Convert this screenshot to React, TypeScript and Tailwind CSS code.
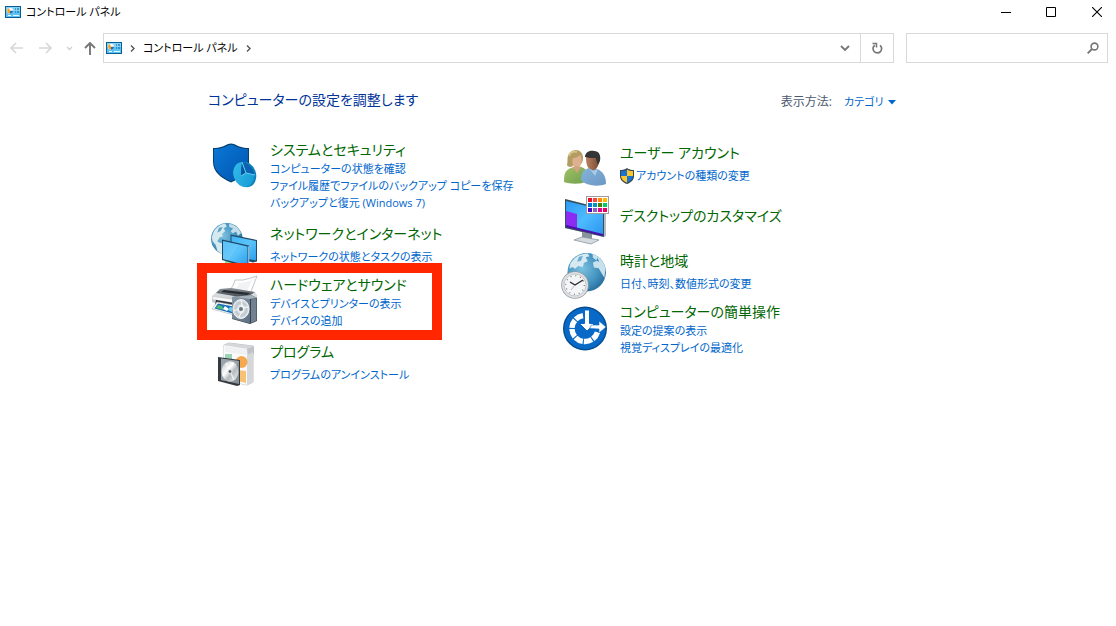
import type { ReactNode } from "react";

type Category = {
  title: string;
  icon: ReactNode;
  links: { label: string; shield?: boolean }[];
  highlighted?: boolean;
};

function ControlPanelIcon() {
  return (
    <svg width="16" height="12" viewBox="0 0 16 12" className="shrink-0">
      <rect width="16" height="12" fill="#0b5c94" />
      <rect x="1" y="1" width="14" height="10" fill="#5cc3f5" />
      <rect x="1" y="1" width="14" height="4" fill="#83d3f9" />
      <circle cx="5" cy="4.800" r="3" fill="#fff" />
      <path d="M5 4.800V7.800a3 3 0 0 1 -1-5.800z" fill="#f7a022" />
      <path d="M5 4.800h3a3 3 0 0 1-3 3z" fill="#1d6fb5" />
      <path d="M10 3h1M12 3h2M10 6h1M12 6h2" stroke="#0b5c94" strokeWidth="1.200" />
      <path d="M3 9.500h3M8 9.500h6" stroke="#e6f7ff" strokeWidth="1" />
    </svg>
  );
}

function SecurityIcon() {
  return (
    <svg width="50" height="50" viewBox="0 0 50 50" className="shrink-0">
      <defs>
        <linearGradient id="sec-a" x1="0" y1="0" x2="1" y2="1">
          <stop offset="0" stopColor="#0a78d6" />
          <stop offset="1" stopColor="#0054ae" />
        </linearGradient>
        <linearGradient id="sec-b" x1="0" y1="0" x2="1" y2="1">
          <stop offset="0" stopColor="#35bdec" />
          <stop offset="1" stopColor="#1398d2" />
        </linearGradient>
      </defs>
      <path d="M5 8C12 8 16 6 20 4q3-1 6 0c4 2 8 4 15 4v14c0 10-8 16-18 20.500C13 38 5 32 5 22z" fill="#07406f" />
      <path d="M6 9c7 0 11-2 15-4q2-.7 4 0c4 2 8 4 15 4v13c0 9-8 15-17 19.300C14 37 6 31 6 22z" fill="url(#sec-a)" />
      <ellipse cx="37.500" cy="34.500" rx="10.500" ry="13" fill="#0f83bd" transform="rotate(-18 37.500 34.500)" />
      <ellipse cx="35.500" cy="34.500" rx="10" ry="12.700" fill="url(#sec-b)" transform="rotate(-18 35.500 34.500)" />
      <path d="M38 33l-4-11c6 .5 11 5 12.500 13z" fill="#0b62b0" />
      <path d="M38 33l-5 3c0-5 0-9 1-14z" fill="#0857a4" />
      <path d="M33 36l5-3 9 2M38 33L34 22" stroke="#5fd0f4" strokeWidth="1" fill="none" />
    </svg>
  );
}

function GlobeShapes({ id }: { id: string }) {
  return (
    <>
      <defs>
        <radialGradient id={id} cx=".38" cy=".4" r=".75">
          <stop offset="0" stopColor="#7cc1e0" />
          <stop offset=".6" stopColor="#4090bd" />
          <stop offset="1" stopColor="#1d5f8e" />
        </radialGradient>
      </defs>
      <circle cx="20" cy="20" r="20" fill={`url(#${id})`} />
    </>
  );
}

function NetworkIcon() {
  return (
    <svg width="50" height="50" viewBox="0 0 50 50" className="shrink-0">
      <defs>
        <linearGradient id="net-s" x1="0" y1="0" x2="1" y2="1">
          <stop offset="0" stopColor="#3fb4f5" />
          <stop offset=".5" stopColor="#5cc4fa" />
          <stop offset="1" stopColor="#2a9deb" />
        </linearGradient>
      </defs>
      <g transform="translate(3 2) scale(.79)">
        <GlobeShapes id="net-g" />
        <path d="M3 12C7 4 14 1 18 1l2 3-4 3 2 3-4 4 1 3-4 1-3 5 3 2 5 1 4 5-2 4-4 5-6-5-2-7-4-5-1-5z" fill="#d6e9ee" />
        <path d="M23 1c7 1 12 5 15 12l-4 3-2-5-5 2-2-3 3-3-5-2z" fill="#c2dde8" />
        <path d="M10 6l5-1-3 5-4 2z" fill="#5ca5c9" />
      </g>
      <path d="M17 39l18 3v7H24l-7-3z" fill="#35b84a" />
      <path d="M17 39l18 3v2l-18-2z" fill="#8ce398" />
      <path d="M22.500 13.500L49 19v21.500l-4 1-22.500-6z" fill="#234a66" />
      <path d="M23.500 15L48 20v19.500l-24.500-5z" fill="url(#net-s)" />
      <path d="M14 18.500L41 24.500V46l-2 .5L14 39z" fill="#1d4866" />
      <path d="M15 20l24.500 5.500v19L15 38z" fill="url(#net-s)" />
      <path d="M15 20l16 3.700-11 15.500-5-1.200z" fill="#7dd0fb" opacity=".45" />
      <path d="M40 25.500l1.200-.5v21l-1.200.3z" fill="#8fb4c6" />
    </svg>
  );
}

function HardwareIcon() {
  return (
    <svg width="50" height="50" viewBox="0 0 50 50" className="shrink-0">
      <defs>
        <linearGradient id="hw-p" x1="0" y1="0" x2="0" y2="1">
          <stop offset="0" stopColor="#8b9298" />
          <stop offset="1" stopColor="#3b4248" />
        </linearGradient>
        <linearGradient id="hw-b" x1="0" y1="0" x2="0" y2="1">
          <stop offset="0" stopColor="#eceef0" />
          <stop offset="1" stopColor="#a9b0b5" />
        </linearGradient>
        <linearGradient id="hw-s" x1="0" y1="0" x2="1" y2="1">
          <stop offset="0" stopColor="#8b9bab" />
          <stop offset="1" stopColor="#5b6d7f" />
        </linearGradient>
        <radialGradient id="hw-c">
          <stop offset="0" stopColor="#8d979f" />
          <stop offset=".3" stopColor="#eef2f4" />
          <stop offset=".65" stopColor="#bcc6cd" />
          <stop offset="1" stopColor="#e2e7ea" />
        </radialGradient>
      </defs>
      <path d="M27 5l8 0c4-1 8-2 14-4l-7 18-21-3c3-3 5-7 6-11z" fill="#fff" stroke="#b3b8bc" strokeWidth=".8" />
      <path d="M31 8c4 0 8-1 13-3l-6 13-12-2c2-2 4-5 5-8z" fill="#f1f2f3" />
      <path d="M4 21l8-7 11-1 24 4 2 3v11l-14 5L4 27z" fill="url(#hw-b)" />
      <path d="M12 14l11-1 24 4-9 6-30-5z" fill="url(#hw-p)" />
      <path d="M16 15l26 3-3 2-26-3z" fill="#272c30" />
      <path d="M5 22l30 4v3L5 24z" fill="#fafafa" />
      <path d="M8 25l24 4v6L7 30z" fill="#2b3137" />
      <path d="M9 27l22 4-5 9-22-6z" fill="#fff" stroke="#a8afb4" strokeWidth=".6" />
      <path d="M10 28.500l18 3.500-3.500 6.500L6.500 33.500z" fill="#1b6db8" />
      <path d="M10 30l4 1 2 4-8-2z" fill="#4fbd73" />
      <path d="M17 31l4 3-2 2-4-2z" fill="#fff" />
      <path d="M22 32l4 1-2 4-4-2z" fill="#70cee8" />
      <path d="M24 22l19-2 6 3v23l-7 3-18-5z" fill="#34434f" />
      <path d="M24 22l18 1v25.500l-18-5z" fill="url(#hw-s)" />
      <path d="M24 22l19-2 6 3-7 1z" fill="#a4b0ba" />
      <path d="M43 24.500l5.500-1v22L43 48z" fill="#718190" />
      <ellipse cx="33" cy="34" rx="8" ry="9.500" fill="url(#hw-c)" stroke="#f1f4f5" />
      <path d="M33 25l2 9-4 8M26 36l7-3 7-1" stroke="#fff" strokeWidth="1.300" fill="none" opacity=".7" />
      <circle cx="33" cy="34" r="2" fill="#6d7780" />
    </svg>
  );
}

function ProgramsIcon() {
  return (
    <svg width="50" height="50" viewBox="0 0 50 50" className="shrink-0">
      <defs>
        <linearGradient id="prg-c" x1="0" y1="0" x2="1" y2="1">
          <stop offset="0" stopColor="#b9bec2" />
          <stop offset=".4" stopColor="#fff" />
          <stop offset=".6" stopColor="#b4babd" />
          <stop offset="1" stopColor="#f2f4f5" />
        </linearGradient>
      </defs>
      <path d="M16 6l5-2 24 3v36l-6 3-23-5z" fill="#e8eaeb" stroke="#b2b5b8" strokeWidth=".8" />
      <path d="M16 6l23 3v37l-23-5z" fill="#fafafa" />
      <path d="M15 6l6-2 25 3-6 3z" fill="#d4d7d9" />
      <path d="M39 10l7-3v8l-6 3z" fill="#bfc3c6" />
      <path d="M39 16l6-3v30l-6 3z" fill="#d5d7d9" />
      <path d="M17 7l22 3v6l-22-3z" fill="#f0f1f2" />
      <path d="M17 15h7v6h-7z" fill="#9bd3b6" />
      <circle cx="33.500" cy="23" r="6" fill="#f7a950" />
      <path d="M30 31l8 1v12l-8-2z" fill="#f7c274" />
      <path d="M10 18l22 3v25l-3 1-19-5z" fill="#353a3e" />
      <path d="M13 19.500l18 2.500v23l-18-4z" fill="#89929a" />
      <path d="M13 19.500l18 2.500-14 20-4-1z" fill="#a9b1b8" opacity=".6" />
      <ellipse cx="22" cy="32.500" rx="8.400" ry="10.300" fill="url(#prg-c)" />
      <path d="M18 24l4 8 4 9" stroke="#fff" strokeWidth="1.500" opacity=".7" />
      <circle cx="22" cy="32.500" r="2.500" fill="#d7dadd" />
      <circle cx="22" cy="32.500" r="1.300" fill="#4b5157" />
    </svg>
  );
}

function UsersIcon() {
  return (
    <svg width="50" height="50" viewBox="0 0 50 50" className="shrink-0">
      <defs>
        <linearGradient id="usr-g" x1="0" y1="0" x2="1" y2="1">
          <stop offset="0" stopColor="#a3c269" />
          <stop offset="1" stopColor="#6d9f4b" />
        </linearGradient>
        <linearGradient id="usr-b" x1="0" y1="0" x2="1" y2="1">
          <stop offset="0" stopColor="#86b3da" />
          <stop offset="1" stopColor="#6b98c4" />
        </linearGradient>
        <linearGradient id="usr-f" x1="0" y1="0" x2="1" y2="0">
          <stop offset="0" stopColor="#b98260" />
          <stop offset="1" stopColor="#7a4c34" />
        </linearGradient>
      </defs>
      <path d="M6 42c0-8 1-12 7-14l7-2c5 1 8 3 9 6v9c-7 4-17 3-23 1z" fill="url(#usr-g)" />
      <path d="M9 25c1-3 0-7 1-9 1-4 5-6 8-6 4 0 7 3 7 8 0 3-1 6-4 8l-5-1-3 2c-2 0-4-1-4-2z" fill="#b39b62" />
      <path d="M15 18c3 0 5-1 7-3 2 3 2 6 1 9-1 3-4 4-6 3-3-2-3-6-2-9z" fill="#dfb08f" />
      <path d="M14 27l4-1 5 1-4 6z" fill="#d3a281" />
      <path d="M11 16c1-4 5-5 8-4" stroke="#d5c58b" strokeWidth="2" fill="none" />
      <path d="M23 40c0-7 2-10 8-12l8 1c5 2 9 6 9 15-8 3-20 2-25-4z" fill="url(#usr-b)" />
      <path d="M28 18c0 7 2 12 7 12 4 0 6-5 6-11 0-5-3-7-6-7s-7 2-7 6z" fill="url(#usr-f)" />
      <path d="M27 17c0-4 4-7 9-6 5 0 7 4 6 10l-2 4c-1-3-2-5-2-7-4 0-7 0-11-1z" fill="#343535" />
      <path d="M31 28l4 3 5-2-3 7z" fill="#a9cae5" />
    </svg>
  );
}

function PersonalizeIcon() {
  const rows = [
    ["#e81123", "#ff4343", "#ff8c00", "#ffb900"],
    ["#0078d7", "#0099bc", "#498205", "#00cc6a"],
    ["#4b00c8", "#8764b8", "#e3008c", "#ea005e"],
  ];
  return (
    <svg width="52" height="52" viewBox="0 0 52 52" className="-mr-[2px] shrink-0">
      <defs>
        <linearGradient id="pers-s" x1="0" y1="0" x2="1" y2="1">
          <stop offset="0" stopColor="#2a9af5" />
          <stop offset=".5" stopColor="#4dbbff" />
          <stop offset="1" stopColor="#2b94ef" />
        </linearGradient>
      </defs>
      <path d="M24 38l10 2v7l-10-1z" fill="#87949d" />
      <path d="M16 46l8-3 17 3-8 4z" fill="#d5dce0" stroke="#8d979e" strokeWidth=".8" />
      <path d="M7 5l41 10v27l-2 1L7 34z" fill="#b3bcc2" />
      <path d="M7 5l39 10v28L7 34z" fill="#34505f" />
      <path d="M8 7l37 9v25.500L8 32.500z" fill="url(#pers-s)" />
      <path d="M8 17l11 3v15L8 32.500z" fill="#8a2cf2" />
      <path d="M8 31l37 9v2L8 33z" fill="#4c0cad" />
      <rect x="28.500" y="2.500" width="22" height="17" fill="#fff" stroke="#9d9d9d" />
      {rows.map((row, y) =>
        row.map((color, x) => (
          <rect key={`${x}-${y}`} x={30 + x * 5} y={4 + y * 5} width="4" height="4" fill={color} />
        ))
      )}
    </svg>
  );
}

function ClockIcon() {
  return (
    <svg width="50" height="52" viewBox="0 0 50 52" className="shrink-0">
      <g transform="translate(9.500 5) scale(.96)">
        <GlobeShapes id="clk-g" />
        <path d="M3 11C8 3 14 1 21 .500l2 3-4 1 2 4-4 2-1 4-5-1-3 3-3-2-3 2z" fill="#d7eaf2" />
        <path d="M12 4l4-1-2 5-4 1z" fill="#67afd2" />
        <path d="M26 1c7 2 12 8 13.500 15l-1 10-3-5-3-5-5-1-1-5 4-2-4-3z" fill="#c8e1ec" />
        <path d="M31 5l2 4-3-1z" fill="#3989b7" />
      </g>
      <circle cx="17" cy="37" r="13.800" fill="#959ca1" />
      <circle cx="17" cy="37" r="13" fill="#dfe2e4" />
      <circle cx="17" cy="37" r="11" fill="#f4f5f6" stroke="#b7bcc0" strokeWidth=".8" />
      <circle cx="17" cy="37" r="9.300" fill="none" stroke="#7d858b" strokeWidth="1.300" strokeDasharray="1 3.870" />
      <path d="M12 34l5 3L25 32" stroke="#262c30" strokeWidth="1.400" fill="none" />
      <path d="M17 37l-4 5" stroke="#989fa4" strokeWidth=".7" />
    </svg>
  );
}

function EaseIcon() {
  return (
    <svg width="50" height="50" viewBox="0 0 50 50" className="shrink-0">
      <circle cx="27" cy="26.500" r="22" fill="#064c8f" />
      <circle cx="27" cy="26.500" r="20.600" fill="#0869c7" />
      <path d="M25 13.700A13 13 0 1 0 39.500 30" fill="none" stroke="#fff" strokeWidth="5.400" strokeDasharray="8.300 1.100" />
      <path d="M26.500 8h5v13.500h5L29 29l-7.500-7.500h5z" fill="#fff" stroke="#0869c7" strokeWidth="1" />
      <path d="M31.500 26.500l2-3.500H41v-4l7 6-7 6v-4z" fill="#fff" stroke="#0869c7" strokeWidth=".6" />
    </svg>
  );
}

function UacShield() {
  return (
    <svg width="14" height="16" viewBox="0 0 14 16" className="shrink-0">
      <path d="M7 0c2 1.500 4 2 7 2v6c0 4-3 6.500-7 8-4-1.500-7-4-7-8V2c3 0 5-.5 7-2z" fill="#394550" />
      <path d="M7 1.500V8H1V3c2.500 0 4.500-.5 6-1.500z" fill="#1774d0" />
      <path d="M7 1.500V8h6V3c-2.500 0-4.500-.5-6-1.500z" fill="#fdc72b" />
      <path d="M1 8h6v6.700C3.500 13.300 1 11 1 8z" fill="#fdc72b" />
      <path d="M13 8H7v6.700c3.500-1.400 6-3.700 6-6.700z" fill="#1774d0" />
    </svg>
  );
}

const leftColumn: Category[] = [
  {
    title: "システムとセキュリティ",
    icon: <SecurityIcon />,
    links: [
      { label: "コンピューターの状態を確認" },
      { label: "ファイル履歴でファイルのバックアップ コピーを保存" },
      { label: "バックアップと復元 (Windows 7)" },
    ],
  },
  {
    title: "ネットワークとインターネット",
    icon: <NetworkIcon />,
    links: [{ label: "ネットワークの状態とタスクの表示" }],
  },
  {
    title: "ハードウェアとサウンド",
    icon: <HardwareIcon />,
    links: [{ label: "デバイスとプリンターの表示" }, { label: "デバイスの追加" }],
    highlighted: true,
  },
  {
    title: "プログラム",
    icon: <ProgramsIcon />,
    links: [{ label: "プログラムのアンインストール" }],
  },
];

const rightColumn: Category[] = [
  {
    title: "ユーザー アカウント",
    icon: <UsersIcon />,
    links: [{ label: "アカウントの種類の変更", shield: true }],
  },
  { title: "デスクトップのカスタマイズ", icon: <PersonalizeIcon />, links: [] },
  {
    title: "時計と地域",
    icon: <ClockIcon />,
    links: [{ label: "日付、時刻、数値形式の変更" }],
  },
  {
    title: "コンピューターの簡単操作",
    icon: <EaseIcon />,
    links: [{ label: "設定の提案の表示" }, { label: "視覚ディスプレイの最適化" }],
  },
];

function CategoryItem({ item }: { item: Category }) {
  const single = item.links.length === 1;
  return (
    <section className="relative flex gap-3">
      <div className="-mb-4 h-[50px] shrink-0">{item.icon}</div>
      <div className={item.links.length === 0 ? "py-3" : single ? "pt-[3px]" : ""}>
        <h2 className="text-[14px] leading-5 whitespace-nowrap">
          <a href="#" className="text-[#006600] hover:underline">{item.title}</a>
        </h2>
        {item.links.length > 0 && (
          <ul className={single ? "mt-1" : ""}>
            {item.links.map((link) => (
              <li key={link.label} className="flex items-center gap-[2px] text-[11px] leading-[17px] whitespace-nowrap">
                {link.shield && <UacShield />}
                <a href="#" className="text-[#0066cc] hover:underline">{link.label}</a>
              </li>
            ))}
          </ul>
        )}
      </div>
      {item.highlighted && (
        <div className="pointer-events-none absolute -top-3 -left-[11px] h-[77px] w-[245px] border-10 border-[#ff2600]" />
      )}
    </section>
  );
}

function TitleBar() {
  return (
    <header className="flex h-6 items-center justify-between pl-[5px]">
      <div className="flex items-center gap-[5px]">
        <ControlPanelIcon />
        <h1 className="text-[11px] leading-6 text-black">コントロール パネル</h1>
      </div>
      <div className="flex">
        <button aria-label="最小化" className="flex h-6 w-[45px] items-center justify-center">
          <svg width="10" height="10" viewBox="0 0 10 10"><path d="M0 5.500h10" stroke="#000" /></svg>
        </button>
        <button aria-label="最大化" className="flex h-6 w-[46px] items-center justify-center">
          <svg width="10" height="10" viewBox="0 0 10 10"><path d="M.5.5h9v9h-9z" fill="none" stroke="#000" /></svg>
        </button>
        <button aria-label="閉じる" className="flex h-6 w-[42px] items-center justify-center pl-1">
          <svg width="10" height="10" viewBox="0 0 10 10"><path d="M0 0l10 10M10 0L0 10" stroke="#000" strokeWidth="1.100" /></svg>
        </button>
      </div>
    </header>
  );
}

function Chevron() {
  return (
    <svg width="5" height="7" viewBox="0 0 5 7" className="shrink-0">
      <path d="M1 .5l3 3-3 3" fill="none" stroke="#555" strokeWidth="1.400" />
    </svg>
  );
}

function NavBar() {
  return (
    <div className="mt-[9px] flex h-[30px] items-center pr-2 pl-[10px]">
      <button aria-label="戻る" className="w-[13px]">
        <svg width="13" height="12" viewBox="0 0 13 12"><path d="M6 1L1 6l5 5M1 6h12" fill="none" stroke="#d8d8d8" strokeWidth="1.600" /></svg>
      </button>
      <button aria-label="進む" className="ml-4 w-[13px]">
        <svg width="13" height="12" viewBox="0 0 13 12"><path d="M7 1l5 5-5 5M12 6H0" fill="none" stroke="#d8d8d8" strokeWidth="1.600" /></svg>
      </button>
      <button aria-label="最近表示した場所" className="ml-[14px] w-[7px]">
        <svg width="7" height="5" viewBox="0 0 7 5"><path d="M1 1l2.500 2.500L6 1" fill="none" stroke="#cfcfcf" strokeWidth="1.300" /></svg>
      </button>
      <button aria-label="上へ" className="ml-[11px] w-3">
        <svg width="12" height="13" viewBox="0 0 12 13"><path d="M1 6l5-5 5 5M6 1v12" fill="none" stroke="#777" strokeWidth="1.900" /></svg>
      </button>
      <div className="ml-[7px] flex h-full flex-1 items-center border border-[#d9d9d9]">
        <nav className="flex flex-1 items-center pl-[2px]">
          <ControlPanelIcon />
          <span className="ml-2"><Chevron /></span>
          <a href="#" className="mx-2 text-[11px] text-black">コントロール パネル</a>
          <Chevron />
        </nav>
        <button aria-label="アドレスの履歴" className="flex h-full w-[30px] items-center justify-center">
          <svg width="10" height="7" viewBox="0 0 10 7"><path d="M1 1l4 4 4-4" fill="none" stroke="#777" strokeWidth="1.900" /></svg>
        </button>
        <button aria-label="更新" className="flex h-full w-[33px] items-center justify-center border-l border-[#d9d9d9]">
          <svg width="12" height="12" viewBox="0 0 12 12">
            <path d="M9 3.300A4.300 4.300 0 1 1 3.800 3.200" fill="none" stroke="#777" strokeWidth="1.700" />
            <path d="M1.500 1.500H5.500V5.500" fill="none" stroke="#777" strokeWidth="1.500" />
          </svg>
        </button>
      </div>
      <label className="ml-3 flex h-full w-[202px] items-center border border-[#d9d9d9] pr-2">
        <input type="search" aria-label="コントロール パネルの検索" className="min-w-0 flex-1 px-2 text-[11px] outline-none" />
        <svg width="12" height="12" viewBox="0 0 12 12">
          <circle cx="7.500" cy="4.500" r="3.400" fill="none" stroke="#777" strokeWidth="1.600" />
          <path d="M5 7L.7 11.300" stroke="#777" strokeWidth="1.900" />
        </svg>
      </label>
    </div>
  );
}

export default function App() {
  return (
    <div className="min-h-screen bg-white font-['Open_Sans','Noto_Sans_CJK_JP',sans-serif] [font-feature-settings:'palt']">
      <TitleBar />
      <NavBar />
      <main className="mx-auto max-w-[700px] pt-[27px]">
        <div className="flex h-5 items-center justify-between pr-3">
          <p className="text-[14px] leading-5 text-[#003399]">コンピューターの設定を調整します</p>
          <div className="flex items-center gap-3 pt-1 text-[12px] leading-5">
            <label htmlFor="view" className="text-[#4c5a70]">表示方法:</label>
            <div className="relative flex items-center">
              <select id="view" defaultValue="category" className="appearance-none bg-transparent pr-3 text-[11px] text-[#0066cc] outline-none">
                <option value="category">カテゴリ</option>
              </select>
              <svg width="8" height="5" viewBox="0 0 8 5" className="pointer-events-none absolute right-0"><path d="M0 0h8L4 4.500z" fill="#0066cc" /></svg>
            </div>
          </div>
        </div>
        <div className="mt-[30px] grid grid-cols-2">
          <div className="flex flex-col gap-[10px]">
            {leftColumn.map((item) => <CategoryItem key={item.title} item={item} />)}
          </div>
          <div className="flex flex-col gap-[10px]">
            {rightColumn.map((item) => <CategoryItem key={item.title} item={item} />)}
          </div>
        </div>
      </main>
    </div>
  );
}
